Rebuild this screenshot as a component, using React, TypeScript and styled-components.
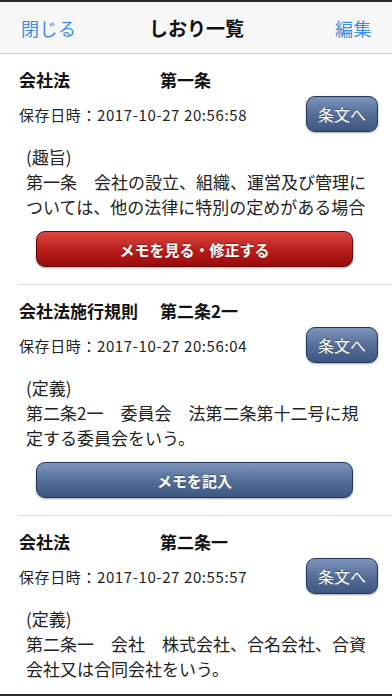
import React from "react";
import styled, { createGlobalStyle, css } from "styled-components";

const GlobalStyle = createGlobalStyle`
  html, body {
    margin: 0;
    padding: 0;
    background: #ffffff;
  }
  body {
    font-family: "Noto Sans CJK JP", "Noto Sans", "Liberation Sans", sans-serif;
    color: #222222;
  }
`;

const Screen = styled.div`
  width: 392px;
  height: 696px;
  box-sizing: border-box;
  border-top: 2px solid #2a2a2a;
  border-bottom: 2px solid #2a2a2a;
  overflow: hidden;
  background: #ffffff;
`;

const NavBar = styled.div`
  height: 52px;
  box-sizing: border-box;
  border-bottom: 1px solid #c9c9c9;
  background: #f7f7f7;
  display: grid;
  grid-template-columns: 1fr auto 1fr;
  align-items: center;
  padding: 0 20px 0 21px;
`;

const NavButton = styled.span<{ $align: "left" | "right" }>`
  font-size: 18px;
  color: #3a8de3;
  justify-self: ${(p) => (p.$align === "left" ? "start" : "end")};
  letter-spacing: 0.5px;
`;

const NavTitle = styled.span`
  font-size: 19px;
  font-weight: 700;
  color: #111111;
`;

const List = styled.div`
  display: flex;
  flex-direction: column;
`;

const Card = styled.div`
  margin-left: 19px;
  padding: 14px 14px 17px 0;
  border-bottom: 1px solid #dedede;
`;

const TitleRow = styled.div`
  display: grid;
  grid-template-columns: 141px auto;
  font-size: 17px;
  font-weight: 700;
  line-height: 24px;
  color: #111111;
`;

const DateRow = styled.div`
  margin-top: 4px;
  display: flex;
  align-items: center;
  justify-content: space-between;
`;

const SavedAt = styled.span`
  font-size: 15px;
  letter-spacing: 0.6px;
  color: #222222;
`;

const buttonBase = css`
  box-sizing: border-box;
  height: 36px;
  border-radius: 9px;
  color: #ffffff;
  display: flex;
  align-items: center;
  justify-content: center;
  box-shadow: 0 1px 2px rgba(0, 0, 0, 0.35);
  text-shadow: 0 -1px 0 rgba(0, 0, 0, 0.3);
`;

const ArticleButton = styled.div`
  ${buttonBase};
  width: 72px;
  font-size: 16px;
  border: 1.5px solid #22345a;
  background: linear-gradient(#7d95bb 0%, #566f99 50%, #3d5781 100%);
`;

const Body = styled.div`
  margin-top: 12px;
  padding-left: 7px;
  width: 345px;
  font-size: 17px;
  line-height: 25px;
  color: #222222;
`;

const MemoButton = styled.div<{ $variant: "red" | "blue" }>`
  ${buttonBase};
  margin: 12px 0 0 17px;
  width: 317px;
  font-size: 15px;
  font-weight: 700;
  ${(p) =>
    p.$variant === "red"
      ? css`
          border: 1.5px solid #650707;
          background: linear-gradient(#dc4a46 0%, #bb1e1c 50%, #9a0c0c 100%);
        `
      : css`
          border: 1.5px solid #22345a;
          background: linear-gradient(#7d95bb 0%, #566f99 50%, #3d5781 100%);
        `}
`;

interface Bookmark {
  law: string;
  article: string;
  savedAt: string;
  heading: string;
  text: string;
  memo?: "view" | "write";
}

const bookmarks: Bookmark[] = [
  {
    law: "会社法",
    article: "第一条",
    savedAt: "2017-10-27 20:56:58",
    heading: "(趣旨)",
    text: "第一条　会社の設立、組織、運営及び管理については、他の法律に特別の定めがある場合",
    memo: "view",
  },
  {
    law: "会社法施行規則",
    article: "第二条2一",
    savedAt: "2017-10-27 20:56:04",
    heading: "(定義)",
    text: "第二条2一　委員会　法第二条第十二号に規定する委員会をいう。",
    memo: "write",
  },
  {
    law: "会社法",
    article: "第二条一",
    savedAt: "2017-10-27 20:55:57",
    heading: "(定義)",
    text: "第二条一　会社　株式会社、合名会社、合資会社又は合同会社をいう。",
  },
];

const App: React.FC = () => {
  return (
    <>
      <GlobalStyle />
      <Screen>
        <NavBar>
          <NavButton $align="left">閉じる</NavButton>
          <NavTitle>しおり一覧</NavTitle>
          <NavButton $align="right">編集</NavButton>
        </NavBar>
        <List>
          {bookmarks.map((b, i) => (
            <Card key={i}>
              <TitleRow>
                <span>{b.law}</span>
                <span>{b.article}</span>
              </TitleRow>
              <DateRow>
                <SavedAt>保存日時：{b.savedAt}</SavedAt>
                <ArticleButton>条文へ</ArticleButton>
              </DateRow>
              <Body>
                {b.heading}
                <br />
                {b.text}
              </Body>
              {b.memo === "view" && (
                <MemoButton $variant="red">メモを見る・修正する</MemoButton>
              )}
              {b.memo === "write" && (
                <MemoButton $variant="blue">メモを記入</MemoButton>
              )}
            </Card>
          ))}
        </List>
      </Screen>
    </>
  );
};

export default App;
